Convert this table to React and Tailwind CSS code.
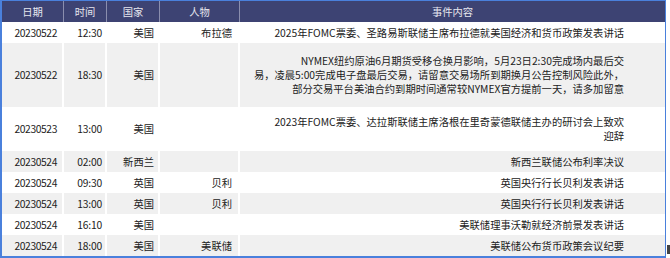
import React from "react";

const rows = [
  { date: "20230522", time: "12:30", country: "美国", person: "布拉德", h: "h-[21px]", bg: "bg-white",
    event: ["2025年FOMC票委、圣路易斯联储主席布拉德就美国经济和货币政策发表讲话"] },
  { date: "20230522", time: "18:30", country: "美国", person: "", h: "h-[64px]", bg: "bg-[#f0f0f0]",
    event: [
      "NYMEX纽约原油6月期货受移仓换月影响，5月23日2:30完成场内最后交",
      "易，凌晨5:00完成电子盘最后交易，请留意交易场所到期换月公告控制风险此外，",
      "部分交易平台美油合约到期时间通常较NYMEX官方提前一天，请多加留意",
    ] },
  { date: "20230523", time: "13:00", country: "美国", person: "", h: "h-[44px]", bg: "bg-white",
    event: ["2023年FOMC票委、达拉斯联储主席洛根在里奇蒙德联储主办的研讨会上致欢", "迎辞"] },
  { date: "20230524", time: "02:00", country: "新西兰", person: "", h: "h-[21px]", bg: "bg-[#f0f0f0]",
    event: ["新西兰联储公布利率决议"] },
  { date: "20230524", time: "09:30", country: "英国", person: "贝利", h: "h-[21px]", bg: "bg-white",
    event: ["英国央行行长贝利发表讲话"] },
  { date: "20230524", time: "13:00", country: "英国", person: "贝利", h: "h-[21px]", bg: "bg-[#f0f0f0]",
    event: ["英国央行行长贝利发表讲话"] },
  { date: "20230524", time: "16:10", country: "美国", person: "", h: "h-[21px]", bg: "bg-white",
    event: ["美联储理事沃勒就经济前景发表讲话"] },
  { date: "20230524", time: "18:00", country: "美国", person: "美联储", h: "h-[21px]", bg: "bg-[#f0f0f0]",
    event: ["美联储公布货币政策会议纪要"] },
];

const cols = "grid grid-cols-[62px_43px_53px_80px_1fr]";

export default function App() {
  return (
    <div className="relative w-[670px] h-[258px] bg-white text-[10.3px] leading-[14px] text-[#222]"
      style={{ fontFamily: '"Noto Sans CJK SC", "Liberation Sans", sans-serif' }}>
      <div className="w-[666px] h-[258px] border-t border-b-2 border-l-2 border-r border-[#4a80dc] overflow-hidden">
        <div className={`${cols} h-[21px] bg-[#3d4373] text-[#e6e7ef]`}>
          {["日期", "时间", "国家", "人物", "事件内容"].map((t, i) => (
            <div key={i} className={`flex items-center justify-center ${i < 4 ? "border-r border-[#8a8eae]" : ""}`}>
              {t}
            </div>
          ))}
        </div>
        {rows.map((r, i) => (
          <div key={i} className={`${cols} ${r.h} ${r.bg}`}>
            <div className="flex items-center justify-end pr-[5px] border-r-2 border-white tracking-[-0.4px]">{r.date}</div>
            <div className="flex items-center justify-end pr-[3px] border-r-2 border-white tracking-[-0.2px]">{r.time}</div>
            <div className="flex items-center justify-end pr-[4px] border-r-2 border-white">{r.country}</div>
            <div className="flex items-center justify-end pr-[6px] border-r-2 border-white">{r.person}</div>
            <div className="flex flex-col items-end justify-center pr-[41px] text-right">
              {r.event.map((l, j) => (
                <div key={j} className="whitespace-nowrap">{l}</div>
              ))}
            </div>
          </div>
        ))}
      </div>
      <div className="absolute right-0 top-[245px] w-[3px] h-[9px] bg-[#444]" />
    </div>
  );
}
